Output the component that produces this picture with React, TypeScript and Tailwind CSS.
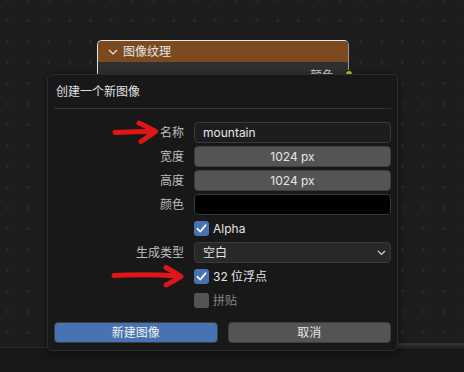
import React from 'react';

const Check = () => (
  <svg width="15" height="15" viewBox="0 0 15 15" className="block">
    <polyline points="3.5,7.8 6.3,10.6 11.6,4.2" fill="none" stroke="#ffffff" strokeWidth="1.8" strokeLinecap="round" strokeLinejoin="round" />
  </svg>
);

const CheckRow = ({ label, checked, dim }: { label: string; checked?: boolean; dim?: boolean }) => (
  <div className="flex items-center gap-[4px] h-[21px]">
    <div className={`w-[15px] h-[15px] rounded-[3px] ${checked ? 'bg-[#4772b3]' : 'bg-[#545454]'}`}>
      {checked && <Check />}
    </div>
    <span className={`text-[12px] ${dim ? 'text-[#858585]' : 'text-[#e4e4e4]'}`}>{label}</span>
  </div>
);

const Label = ({ children }: { children: React.ReactNode }) => (
  <div className="h-[21px] flex items-center justify-end text-[12px] text-[#bdbdbd]">{children}</div>
);

export default function App() {
  return (
    <div className="relative w-[464px] h-[372px] overflow-hidden bg-[#181818] font-['Inter','Noto_Sans_CJK_SC',sans-serif]">
      {/* node editor canvas */}
      <div className="h-[348px] bg-[#1d1d1d] bg-[radial-gradient(circle,#2d2d2d_1px,transparent_1.3px)] bg-[size:20.8px_20.8px] bg-[position:-3px_-10.4px] border-b border-[#2c2c2c]" />
      <div className="absolute left-[398px] top-[343px] w-[66px] h-[3px] bg-[#313131]" />

      {/* image texture node */}
      <div className="absolute left-[97px] top-[40px] w-[252px] h-[70px]">
        <div className="h-full rounded-[5px] border border-[#e8e8e8] border-r-[#9a9a9a] overflow-hidden bg-[#303030]">
          <div className="h-[21px] bg-[#7b4a1f] flex items-center pl-[10px] gap-[5px]">
            <svg width="10" height="8" viewBox="0 0 10 8">
              <polyline points="1,2 5,6 9,2" fill="none" stroke="#e6e6e6" strokeWidth="1.2" />
            </svg>
            <span className="text-[12px] text-[#e6e6e6]">图像纹理</span>
          </div>
          <div className="flex justify-end pr-[14px] pt-[5px] text-[12px] text-[#d4d4d4]">颜色</div>
        </div>
        <div className="absolute right-[-4px] top-[30px] w-[8px] h-[8px] rounded-full bg-[#c7c72a] border border-[#1a1a1a]" />
      </div>

      {/* dialog */}
      <div className="absolute left-[47px] top-[74px] w-[351px] h-[277px] bg-[#181818] border border-[#2b2b2b] rounded-[5px] shadow-[0_2px_10px_rgba(0,0,0,0.5)]">
        <div className="h-[33px] flex items-center pl-[8px] text-[12px] text-[#e0e0e0]">创建一个新图像</div>
        <div className="mx-[6px] h-px bg-[#333333]" />
        <div className="mt-[13px] pl-[6px] grid grid-cols-[130px_197px] gap-x-[10px] gap-y-[3px]">
          <Label>名称</Label>
          <div className="h-[21px] rounded-[4px] bg-[#1d1d1d] border border-[#3a3a3a] flex items-center pl-[8px] text-[12px] text-[#e6e6e6]">mountain</div>

          <Label>宽度</Label>
          <div className="h-[21px] rounded-[4px] bg-[#545454] border border-[#3d3d3d] flex items-center justify-center text-[12px] text-[#e6e6e6]">1024 px</div>

          <Label>高度</Label>
          <div className="h-[21px] rounded-[4px] bg-[#545454] border border-[#3d3d3d] flex items-center justify-center text-[12px] text-[#e6e6e6]">1024 px</div>

          <Label>颜色</Label>
          <div className="h-[21px] rounded-[4px] bg-black border border-[#3a3a3a]" />

          <div />
          <CheckRow label="Alpha" checked />

          <Label>生成类型</Label>
          <div className="h-[21px] rounded-[4px] bg-[#282828] border border-[#3a3a3a] flex items-center justify-between pl-[8px] pr-[4px] text-[12px] text-[#e6e6e6]">
            <span>空白</span>
            <svg width="9" height="6" viewBox="0 0 9 6">
              <polyline points="1,1 4.5,4.5 8,1" fill="none" stroke="#d0d0d0" strokeWidth="1.2" />
            </svg>
          </div>

          <div />
          <CheckRow label="32 位浮点" checked />

          <div />
          <CheckRow label="拼贴" dim />
        </div>
        <div className="mt-[11px] px-[6px] flex gap-[10px]">
          <div className="flex-1 h-[21px] rounded-[4px] bg-[#4772b3] border border-[#3d3d3d] flex items-center justify-center text-[12px] text-[#f0f0f0]">新建图像</div>
          <div className="flex-1 h-[21px] rounded-[4px] bg-[#545454] border border-[#3d3d3d] flex items-center justify-center text-[12px] text-[#e6e6e6]">取消</div>
        </div>
      </div>

      {/* red annotation arrows */}
      <svg className="absolute inset-0 pointer-events-none" width="464" height="372">
        <g fill="none" stroke="#e01616" strokeWidth="5" strokeLinecap="round" strokeLinejoin="round">
          <path d="M115 132.5 Q135 131.5 154 131.5" />
          <path d="M139 123 Q148 127 155.5 131.5 Q148 137 141 141.5" />
          <path d="M114 275.5 Q146 274 179 276" />
          <path d="M166 267.5 Q174 272 181 276.5 Q174 281 166 285" />
        </g>
      </svg>
    </div>
  );
}
